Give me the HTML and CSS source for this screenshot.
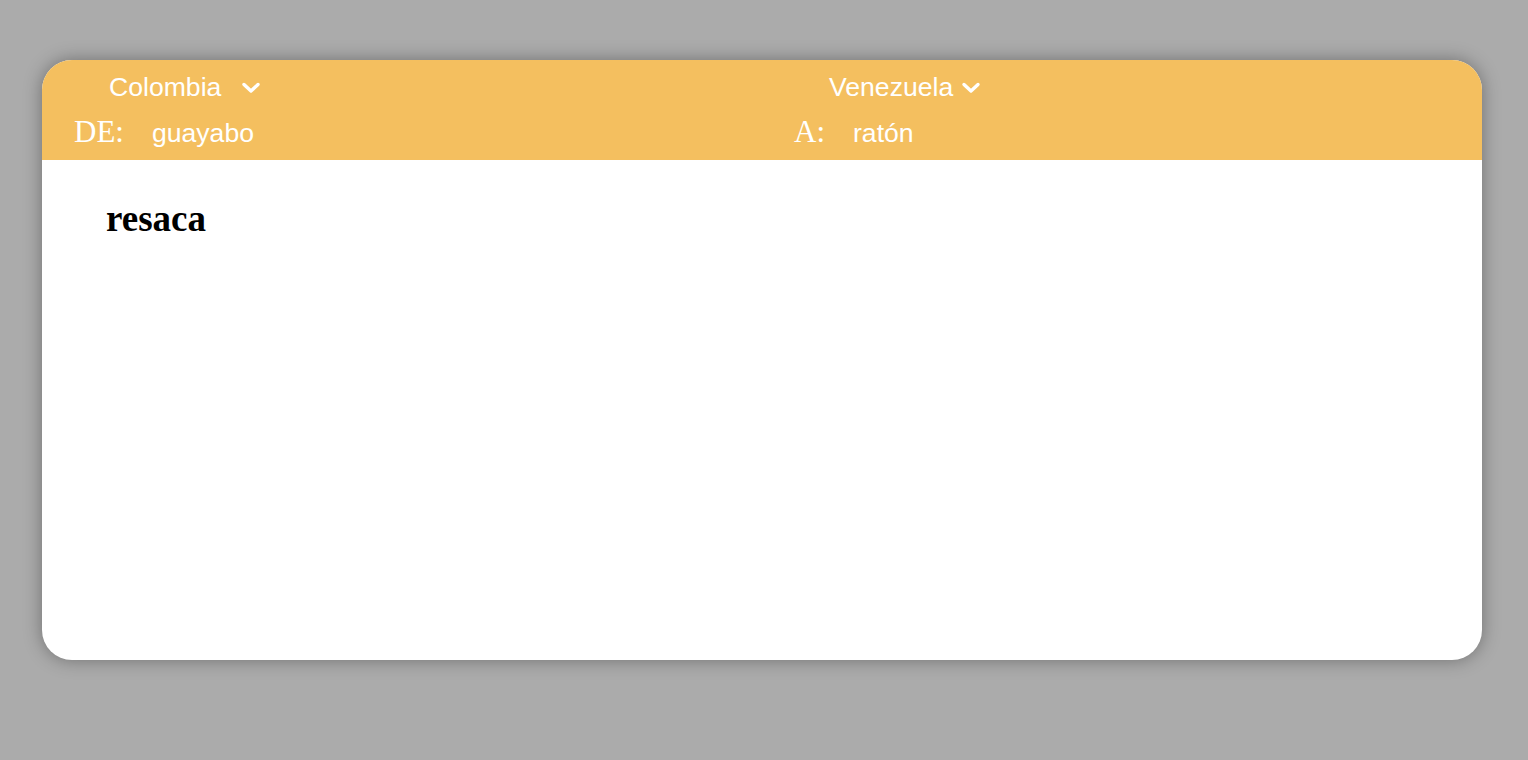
FILE: index.html
```html
<!DOCTYPE html>
<html lang="es">
<head>
<meta charset="utf-8">
<link rel="stylesheet" href="styles.css">
</head>
<body>
<div class="card">
  <header class="head">
    <div class="side">
      <div class="pick"><span class="country">Colombia</span><svg class="chev" width="20" height="12" viewBox="0 0 20 12"><path d="M3 2.5 L10 9 L17 2.5" fill="none" stroke="#fff" stroke-width="3.4" stroke-linecap="round" stroke-linejoin="round"/></svg></div>
      <div class="word"><span class="lbl">DE:</span><span class="val">guayabo</span></div>
    </div>
    <div class="side">
      <div class="pick"><span class="country">Venezuela</span><svg class="chev" width="20" height="12" viewBox="0 0 20 12"><path d="M3 2.5 L10 9 L17 2.5" fill="none" stroke="#fff" stroke-width="3.4" stroke-linecap="round" stroke-linejoin="round"/></svg></div>
      <div class="word"><span class="lbl">A:</span><span class="val">ratón</span></div>
    </div>
  </header>
  <main class="body">
    <h2 class="result">resaca</h2>
  </main>
</div>
</body>
</html>
```
FILE: styles.css
```css
html, body {
  margin: 0;
  padding: 0;
}
body {
  background: #ababab;
  padding: 60px 46px 0 42px;
  height: 760px;
  box-sizing: border-box;
  font-family: "Liberation Serif", "Times New Roman", serif;
}
.card {
  width: 1440px;
  height: 600px;
  background: #fff;
  border-radius: 30px;
  overflow: hidden;
  box-shadow: 0 0 18px rgba(0, 0, 0, 0.35);
}
.head {
  height: 100px;
  background: #f4bf5f;
  display: grid;
  grid-template-columns: 1fr 1fr;
  box-sizing: border-box;
  padding-top: 12px;
}
.side {
  padding-left: 32px;
  color: #fff;
}
.pick {
  display: flex;
  align-items: center;
  padding-left: 35px;
  height: 30px;
}
.country {
  font-family: "Liberation Sans", Arial, sans-serif;
  font-size: 26.6px;
  line-height: 30px;
  width: 132px;
  flex: none;
}
.chev {
  display: block;
  margin-top: 1px;
}
.word {
  display: flex;
  align-items: baseline;
  gap: 28px;
  margin-top: 13px;
  line-height: 34px;
}
.lbl {
  font-family: "Liberation Serif", "Times New Roman", serif;
  font-size: 31px;
}
.val {
  font-family: "Liberation Sans", Arial, sans-serif;
  font-size: 26.6px;
}
.body {
  padding: 38px 64px;
}
.result {
  margin: 0;
  font-family: "Liberation Serif", "Times New Roman", serif;
  font-weight: bold;
  font-size: 37px;
  line-height: 42px;
  color: #000;
}
```
